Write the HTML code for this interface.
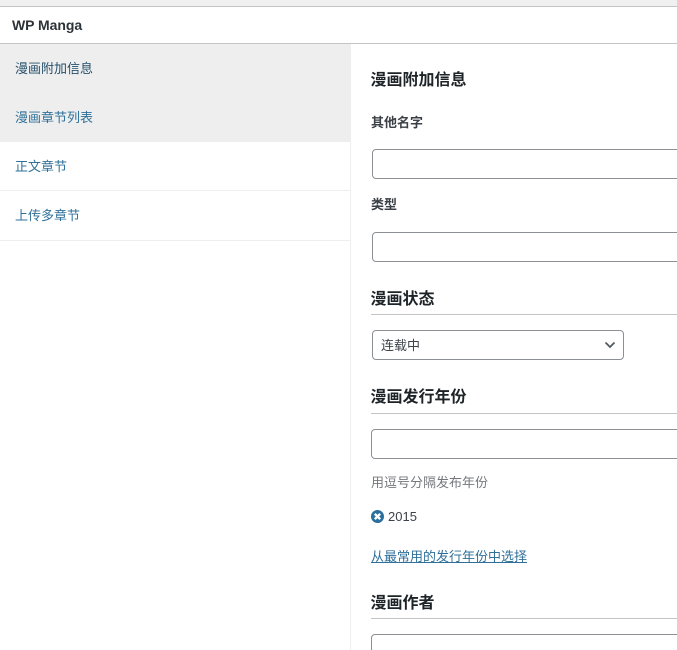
<!DOCTYPE html>
<html lang="zh">
<head>
<meta charset="utf-8">
<style>
html,body{margin:0;padding:0;width:677px;height:650px;overflow:hidden;background:#fff;}
body{position:relative;font-family:"Liberation Sans","Noto Sans CJK SC",sans-serif;color:#1d2327;font-size:13px;}
.a{position:absolute;white-space:nowrap;line-height:20px;}
.box{position:absolute;box-sizing:border-box;background:#fff;border:1px solid #8c8f94;border-radius:4px;}
.line{position:absolute;height:1px;background:#c3c4c7;}
.h{font-size:16px;font-weight:700;color:#1d2327;left:370.5px;}
.l{font-weight:700;font-size:13px;left:371px;color:#3a4045;}
.n{left:15px;font-size:13px;color:#2f7099;}
</style>
</head>
<body>
<div style="position:absolute;left:0;top:0;width:677px;height:6px;background:#f0f0f1;"></div>
<div class="line" style="left:0;top:6px;width:677px;"></div>
<div class="line" style="left:0;top:43px;width:677px;"></div>
<div class="a" style="left:12px;top:15px;font-size:14px;font-weight:700;color:#2c3338;letter-spacing:-0.05px;">WP Manga</div>

<div style="position:absolute;left:0;top:44px;width:350px;height:98px;background:#eeeeee;"></div>
<div style="position:absolute;left:350px;top:44px;width:1px;height:606px;background:#eeeeee;"></div>
<div style="position:absolute;left:0;top:190px;width:350px;height:1px;background:#eeeeee;"></div>
<div style="position:absolute;left:0;top:240px;width:350px;height:1px;background:#eeeeee;"></div>
<div class="a n" style="top:59px;color:#25506b;">漫画附加信息</div>
<div class="a n" style="top:108px;">漫画章节列表</div>
<div class="a n" style="top:157px;">正文章节</div>
<div class="a n" style="top:206px;">上传多章节</div>

<div class="a h" style="top:71px;">漫画附加信息</div>
<div class="a l" style="top:113px;">其他名字</div>
<div class="box" style="left:372px;top:149px;width:320px;height:30px;"></div>
<div class="a l" style="top:195px;">类型</div>
<div class="box" style="left:372px;top:232px;width:320px;height:30px;"></div>

<div class="a h" style="top:290px;">漫画状态</div>
<div class="line" style="left:371px;top:314px;width:306px;"></div>
<div class="box" style="left:372px;top:330px;width:252px;height:30px;"></div>
<div class="a" style="left:381px;top:336px;color:#3c434a;">连载中</div>
<svg style="position:absolute;left:604px;top:340px;" width="12" height="10" viewBox="0 0 12 10"><path d="M1.5 2.5 L6 7 L10.5 2.5" fill="none" stroke="#50575e" stroke-width="1.7"/></svg>

<div class="a h" style="top:388px;">漫画发行年份</div>
<div class="line" style="left:371px;top:413px;width:306px;"></div>
<div class="box" style="left:371px;top:429px;width:320px;height:30px;"></div>
<div class="a" style="left:371px;top:473px;color:#74787d;">用逗号分隔发布年份</div>

<svg style="position:absolute;left:371px;top:510px;" width="13" height="13" viewBox="0 0 13 13"><circle cx="6.5" cy="6.5" r="6.5" fill="#2a6f9e"/><path d="M3.8 3.8 L9.2 9.2 M9.2 3.8 L3.8 9.2" stroke="#fff" stroke-width="2.4" fill="none"/></svg>
<div class="a" style="left:388px;top:507px;color:#3c434a;">2015</div>
<div class="a" style="left:371px;top:547px;color:#2f7099;text-decoration:underline;">从最常用的发行年份中选择</div>

<div class="a h" style="top:594px;">漫画作者</div>
<div class="line" style="left:371px;top:618px;width:306px;"></div>
<div class="box" style="left:371px;top:634px;width:320px;height:30px;"></div>
</body>
</html>
